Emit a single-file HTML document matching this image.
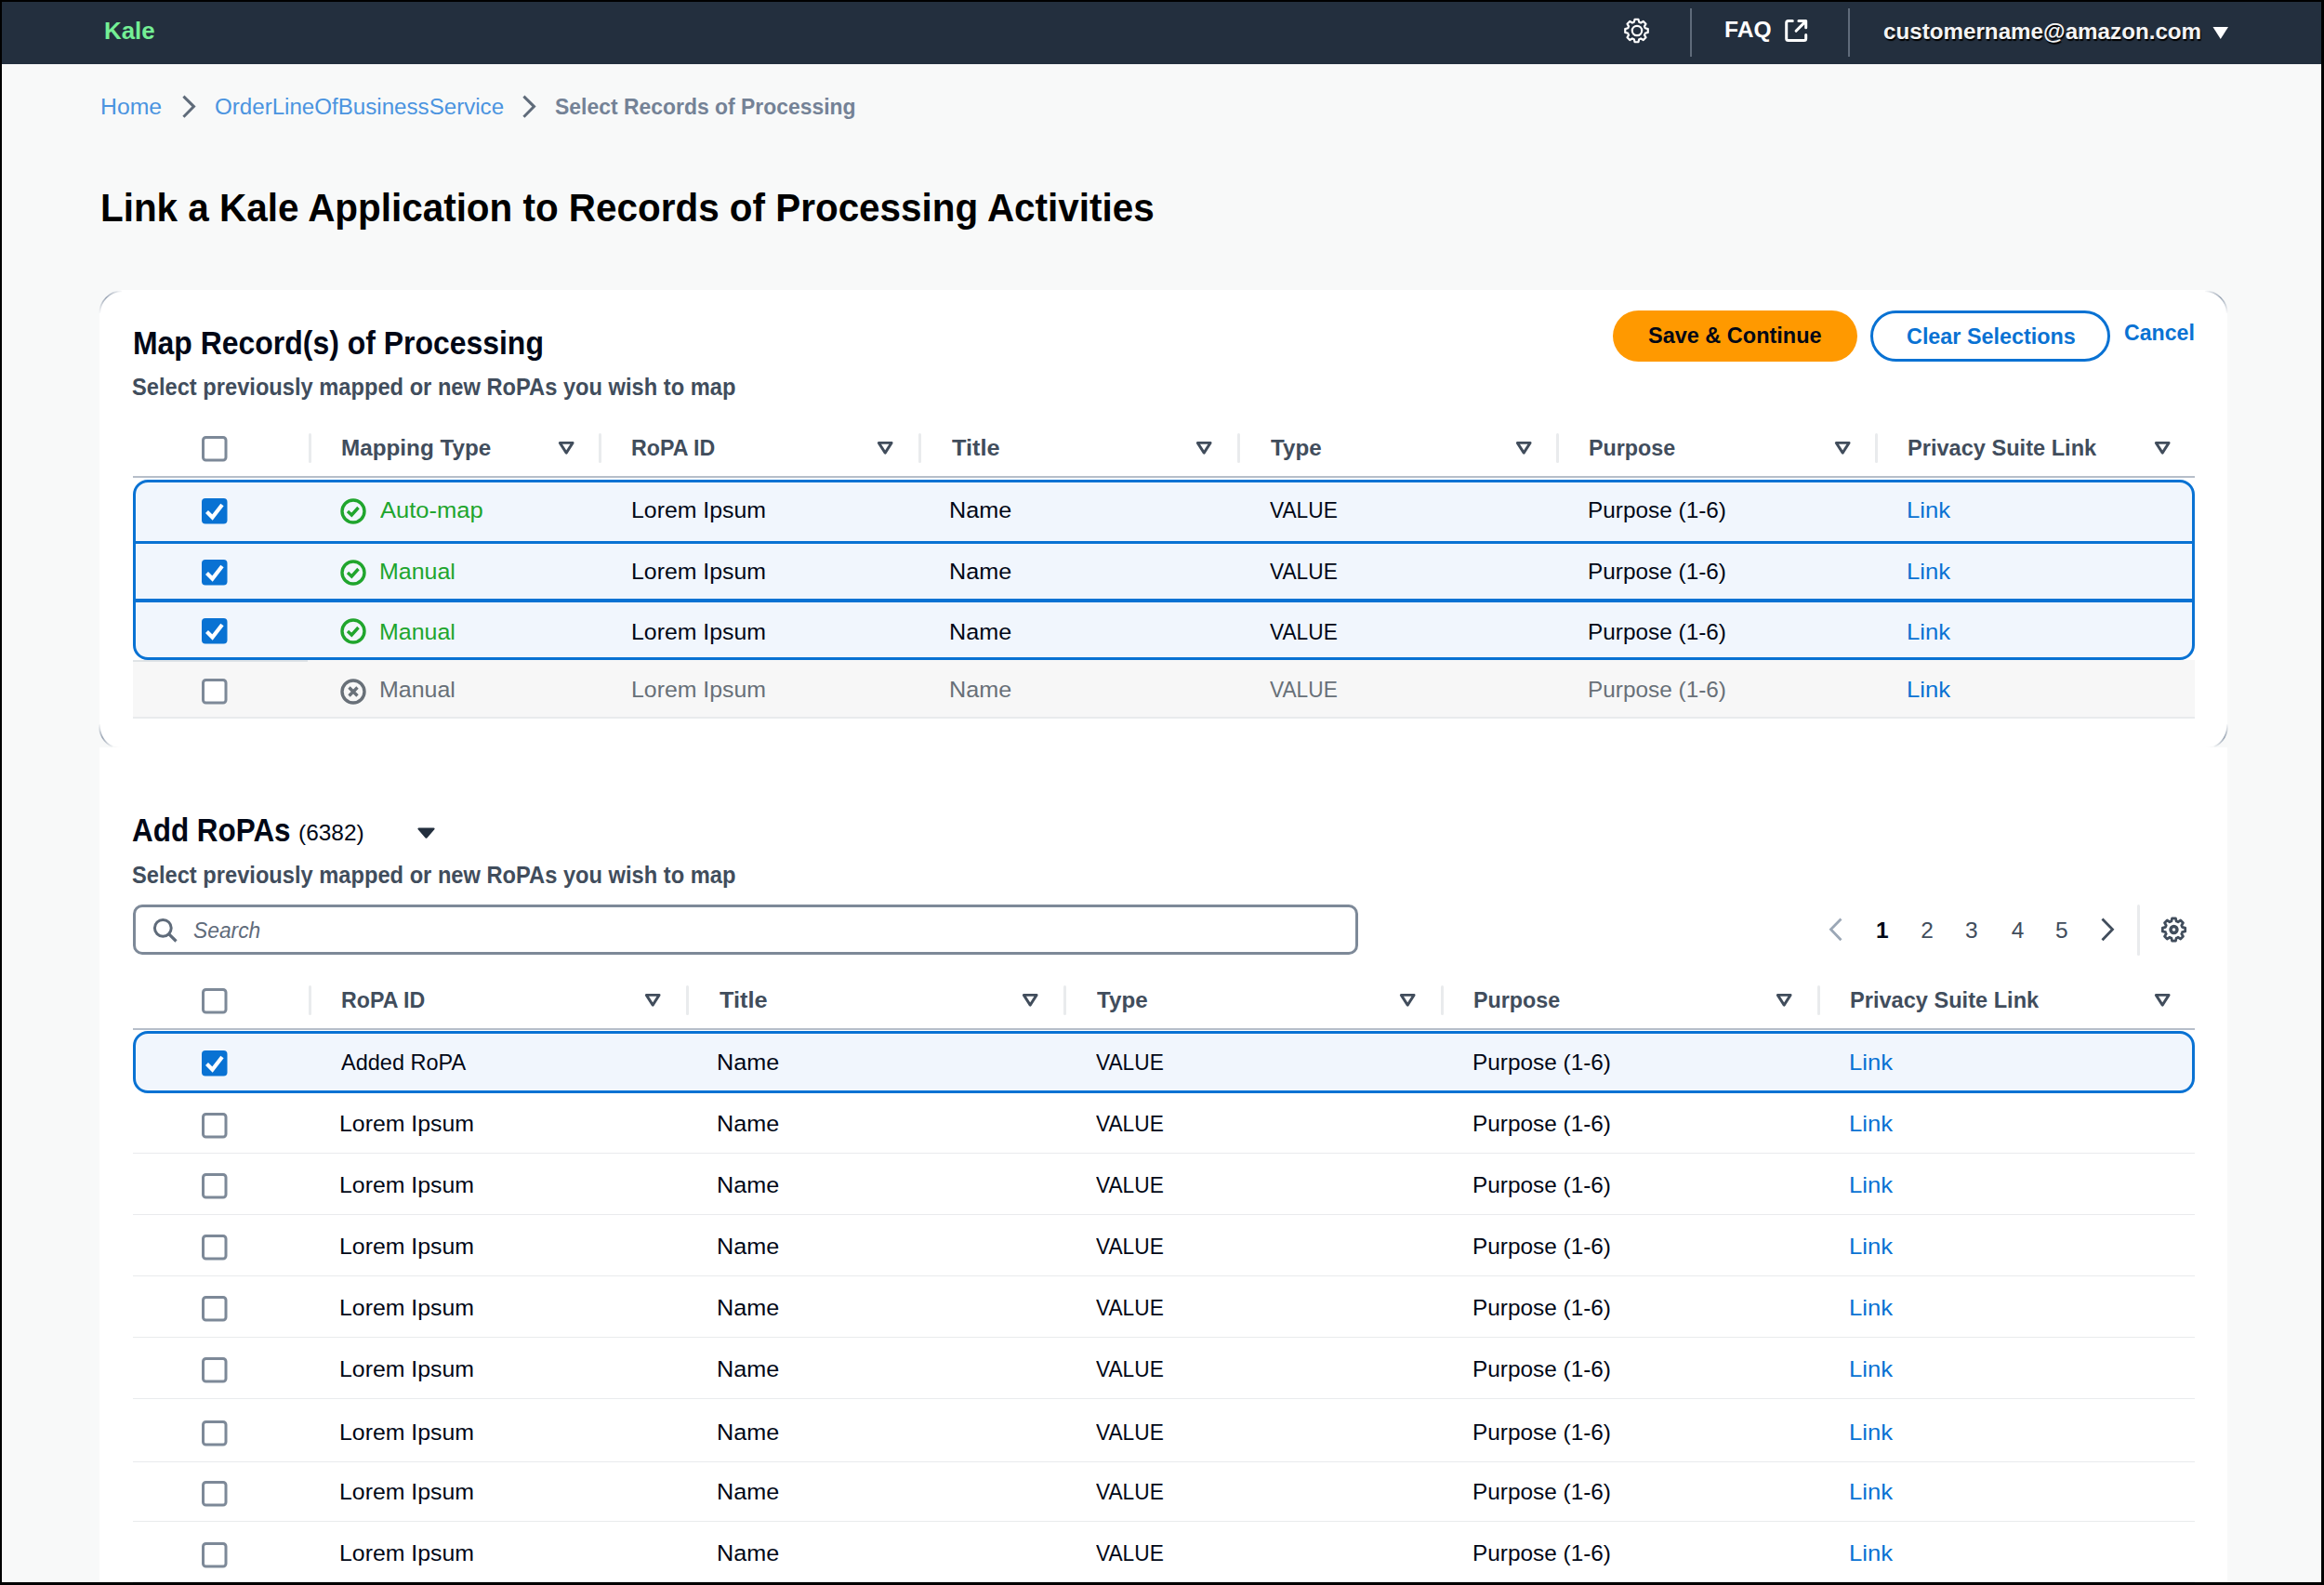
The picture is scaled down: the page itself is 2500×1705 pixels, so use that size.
<!DOCTYPE html><html><head><meta charset="utf-8"><title>Link a Kale Application to Records of Processing Activities</title><style>
html,body{margin:0;padding:0;}
body{width:2500px;height:1705px;position:relative;overflow:hidden;background:#000;font-family:"Liberation Sans", sans-serif;}
.t{position:absolute;white-space:nowrap;}
.r{position:absolute;}
</style></head><body>
<div class="r" style="left:2.0px;top:2.0px;width:2495.0px;height:1700.0px;background:#f8f9f9;"></div>
<div class="r" style="left:2.0px;top:2.0px;width:2495.0px;height:67.0px;background:#232f3e;"></div>
<div class="t" style="left:112.3px;top:20.3px;font-size:26px;line-height:26px;font-weight:700;color:#74ef95;letter-spacing:0px;font-style:normal;transform:scaleX(0.9942);transform-origin:0 0;">Kale</div>
<svg class="r" style="left:1744.0px;top:17.0px;" width="34.0" height="34.0" viewBox="0 0 34.0 34.0"><path d="M14.58,3.75 L18.42,3.75 L19.23,6.80 L19.70,6.95 L20.17,7.13 L20.63,7.34 L21.08,7.56 L23.81,5.98 L26.52,8.69 L24.94,11.42 L25.16,11.87 L25.37,12.33 L25.55,12.80 L25.70,13.27 L28.75,14.08 L28.75,17.92 L25.70,18.73 L25.55,19.20 L25.37,19.67 L25.16,20.13 L24.94,20.58 L26.52,23.31 L23.81,26.02 L21.08,24.44 L20.63,24.66 L20.17,24.87 L19.70,25.05 L19.23,25.20 L18.42,28.25 L14.58,28.25 L13.77,25.20 L13.30,25.05 L12.83,24.87 L12.37,24.66 L11.92,24.44 L9.19,26.02 L6.48,23.31 L8.06,20.58 L7.84,20.13 L7.63,19.67 L7.45,19.20 L7.30,18.73 L4.25,17.92 L4.25,14.08 L7.30,13.27 L7.45,12.80 L7.63,12.33 L7.84,11.87 L8.06,11.42 L6.48,8.69 L9.19,5.98 L11.92,7.56 L12.37,7.34 L12.83,7.13 L13.30,6.95 L13.77,6.80Z" fill="none" stroke="#fff" stroke-width="2.2" stroke-linejoin="round"/><circle cx="17" cy="16" r="5.2" fill="none" stroke="#fff" stroke-width="2.2"/></svg>
<div class="r" style="left:1818.0px;top:9.0px;width:1.5px;height:52.0px;background:#5f6b7a;"></div>
<div class="t" style="left:1854.9px;top:20.2px;font-size:24px;line-height:24px;font-weight:700;color:#fff;letter-spacing:0px;font-style:normal;transform:scaleX(1.0234);transform-origin:0 0;">FAQ</div>
<svg class="r" style="left:1910.0px;top:15.0px;" width="45.0" height="35.0" viewBox="0 0 45.0 35.0"><path d="M18.3,7.5 H13.7 Q11.7,7.5 11.7,9.5 V26.5 Q11.7,28.5 13.7,28.5 H30.7 Q32.7,28.5 32.7,26.5 V22.5" fill="none" stroke="#fff" stroke-width="3" stroke-linecap="round" stroke-linejoin="round"/><path d="M22.1,18.3 L32.2,8.1 M24.9,7.5 H32.7 V14.8" fill="none" stroke="#fff" stroke-width="3" stroke-linecap="round" stroke-linejoin="round"/></svg>
<div class="r" style="left:1988.0px;top:9.0px;width:1.5px;height:52.0px;background:#5f6b7a;"></div>
<div class="t" style="left:2026.2px;top:22.3px;font-size:24px;line-height:24px;font-weight:700;color:#f4f4f4;letter-spacing:0px;font-style:normal;transform:scaleX(1.0077);transform-origin:0 0;text-shadow:1px 2px 1px #000;">customername@amazon.com</div>
<svg class="r" style="left:2378.0px;top:27.0px;" width="22.0" height="18.0" viewBox="0 0 22.0 18.0"><path d="M2.5,2 H19 L10.75,15 Z" fill="#fff"/></svg>
<div class="t" style="left:107.7px;top:103.5px;font-size:23.5px;line-height:23.5px;font-weight:400;color:#4b94e0;letter-spacing:0px;font-style:normal;transform:scaleX(1.0533);transform-origin:0 0;">Home</div>
<svg class="r" style="left:195.0px;top:102.0px;" width="18.0" height="28.0" viewBox="0 0 18.0 28.0"><path d="M2.4,1.6 L13.5,12.6 L2.4,23.8" fill="none" stroke="#5f6b7a" stroke-width="3"/></svg>
<div class="t" style="left:231.0px;top:103.5px;font-size:23.5px;line-height:23.5px;font-weight:400;color:#4b94e0;letter-spacing:0px;font-style:normal;transform:scaleX(1.0266);transform-origin:0 0;">OrderLineOfBusinessService</div>
<svg class="r" style="left:561.0px;top:102.0px;" width="18.0" height="28.0" viewBox="0 0 18.0 28.0"><path d="M2.4,1.6 L13.5,12.6 L2.4,23.8" fill="none" stroke="#5f6b7a" stroke-width="3"/></svg>
<div class="t" style="left:597.1px;top:103.4px;font-size:24px;line-height:24px;font-weight:700;color:#748296;letter-spacing:0px;font-style:normal;transform:scaleX(0.9552);transform-origin:0 0;">Select Records of Processing</div>
<div class="t" style="left:107.9px;top:202.7px;font-size:42px;line-height:42px;font-weight:700;color:#000;letter-spacing:0px;font-style:normal;transform:scaleX(0.9625);transform-origin:0 0;">Link a Kale Application to Records of Processing Activities</div>
<div class="r" style="left:107.0px;top:312.0px;width:2289.0px;height:492.0px;background:#fff;border-radius:24px;"></div>
<div class="t" style="left:143.2px;top:351.0px;font-size:35px;line-height:35px;font-weight:700;color:#000716;letter-spacing:0px;font-style:normal;transform:scaleX(0.9125);transform-origin:0 0;">Map Record(s) of Processing</div>
<div class="t" style="left:142.4px;top:404.4px;font-size:25px;line-height:25px;font-weight:700;color:#414d5c;letter-spacing:0px;font-style:normal;transform:scaleX(0.9469);transform-origin:0 0;">Select previously mapped or new RoPAs you wish to map</div>
<div class="r" style="left:1734.5px;top:333.5px;width:263.5px;height:55.5px;background:#ff9900;border-radius:28px;"></div>
<div class="t" style="left:1773.0px;top:349.4px;font-size:24.5px;line-height:24.5px;font-weight:700;color:#000716;letter-spacing:0px;font-style:normal;transform:scaleX(0.9585);transform-origin:0 0;">Save &amp; Continue</div>
<div class="r" style="left:2012.0px;top:333.5px;width:258.0px;height:55.0px;box-sizing:border-box;border:3px solid #0972d3;border-radius:28px;"></div>
<div class="t" style="left:2050.7px;top:349.6px;font-size:24.5px;line-height:24.5px;font-weight:700;color:#0972d3;letter-spacing:0px;font-style:normal;transform:scaleX(0.9540);transform-origin:0 0;">Clear Selections</div>
<div class="t" style="left:2285.1px;top:346.4px;font-size:24.5px;line-height:24.5px;font-weight:700;color:#0972d3;letter-spacing:0px;font-style:normal;transform:scaleX(0.9436);transform-origin:0 0;">Cancel</div>
<svg class="r" style="left:217.0px;top:468.5px;" width="28.0" height="28.0" viewBox="0 0 28.0 28.0"><rect x="1.5" y="1.5" width="24.5" height="24.5" rx="3" fill="#fff" stroke="#7d8998" stroke-width="3"/></svg>
<div class="r" style="left:331.9px;top:465.5px;width:3.0px;height:32.5px;background:#e9ebed;border-radius:2px;"></div>
<div class="r" style="left:644.1px;top:465.5px;width:3.0px;height:32.5px;background:#e9ebed;border-radius:2px;"></div>
<div class="r" style="left:987.5px;top:465.5px;width:3.0px;height:32.5px;background:#e9ebed;border-radius:2px;"></div>
<div class="r" style="left:1330.5px;top:465.5px;width:3.0px;height:32.5px;background:#e9ebed;border-radius:2px;"></div>
<div class="r" style="left:1674.3px;top:465.5px;width:3.0px;height:32.5px;background:#e9ebed;border-radius:2px;"></div>
<div class="r" style="left:2017.3px;top:465.5px;width:3.0px;height:32.5px;background:#e9ebed;border-radius:2px;"></div>
<div class="t" style="left:366.9px;top:471.1px;font-size:23.5px;line-height:23.5px;font-weight:700;color:#414d5c;letter-spacing:0px;font-style:normal;transform:scaleX(1.0323);transform-origin:0 0;">Mapping Type</div>
<svg class="r" style="left:598.6px;top:473.0px;" width="22.0" height="18.0" viewBox="0 0 22.0 18.0"><path d="M3.3,3.4 H17.1 L10.2,14.1 Z" fill="none" stroke="#414d5c" stroke-width="2.9" stroke-linejoin="round"/></svg>
<div class="t" style="left:679.1px;top:471.1px;font-size:23.5px;line-height:23.5px;font-weight:700;color:#414d5c;letter-spacing:0px;font-style:normal;transform:scaleX(0.9867);transform-origin:0 0;">RoPA ID</div>
<svg class="r" style="left:942.0px;top:473.0px;" width="22.0" height="18.0" viewBox="0 0 22.0 18.0"><path d="M3.3,3.4 H17.1 L10.2,14.1 Z" fill="none" stroke="#414d5c" stroke-width="2.9" stroke-linejoin="round"/></svg>
<div class="t" style="left:1023.5px;top:471.1px;font-size:23.5px;line-height:23.5px;font-weight:700;color:#414d5c;letter-spacing:0px;font-style:normal;transform:scaleX(1.0766);transform-origin:0 0;">Title</div>
<svg class="r" style="left:1285.0px;top:473.0px;" width="22.0" height="18.0" viewBox="0 0 22.0 18.0"><path d="M3.3,3.4 H17.1 L10.2,14.1 Z" fill="none" stroke="#414d5c" stroke-width="2.9" stroke-linejoin="round"/></svg>
<div class="t" style="left:1366.5px;top:471.1px;font-size:23.5px;line-height:23.5px;font-weight:700;color:#414d5c;letter-spacing:0px;font-style:normal;transform:scaleX(1.0288);transform-origin:0 0;">Type</div>
<svg class="r" style="left:1628.8px;top:473.0px;" width="22.0" height="18.0" viewBox="0 0 22.0 18.0"><path d="M3.3,3.4 H17.1 L10.2,14.1 Z" fill="none" stroke="#414d5c" stroke-width="2.9" stroke-linejoin="round"/></svg>
<div class="t" style="left:1709.3px;top:471.1px;font-size:23.5px;line-height:23.5px;font-weight:700;color:#414d5c;letter-spacing:0px;font-style:normal;transform:scaleX(0.9913);transform-origin:0 0;">Purpose</div>
<svg class="r" style="left:1971.8px;top:473.0px;" width="22.0" height="18.0" viewBox="0 0 22.0 18.0"><path d="M3.3,3.4 H17.1 L10.2,14.1 Z" fill="none" stroke="#414d5c" stroke-width="2.9" stroke-linejoin="round"/></svg>
<div class="t" style="left:2052.3px;top:471.1px;font-size:23.5px;line-height:23.5px;font-weight:700;color:#414d5c;letter-spacing:0px;font-style:normal;transform:scaleX(1.0035);transform-origin:0 0;">Privacy Suite Link</div>
<svg class="r" style="left:2316.0px;top:473.0px;" width="22.0" height="18.0" viewBox="0 0 22.0 18.0"><path d="M3.3,3.4 H17.1 L10.2,14.1 Z" fill="none" stroke="#414d5c" stroke-width="2.9" stroke-linejoin="round"/></svg>
<div class="r" style="left:143.0px;top:512.0px;width:2218.0px;height:1.5px;background:#b6bec9;"></div>
<div class="r" style="left:142.5px;top:516.0px;width:2218.5px;height:194.0px;box-sizing:border-box;border:3px solid #0972d3;border-radius:16px;background:#f1f6fd;"></div>
<div class="r" style="left:145.0px;top:582.0px;width:2213.0px;height:3.0px;background:#0972d3;"></div>
<div class="r" style="left:145.0px;top:644.0px;width:2213.0px;height:3.5px;background:#0972d3;"></div>
<div class="r" style="left:143.0px;top:710.0px;width:2218.0px;height:61.0px;background:#f7f7f7;"></div>
<div class="r" style="left:143.0px;top:771.0px;width:2218.0px;height:1.5px;background:#e9ebed;"></div>
<svg class="r" style="left:217.0px;top:536.2px;" width="28.0" height="28.0" viewBox="0 0 28.0 28.0"><rect x="0" y="0" width="27.5" height="27.5" rx="4" fill="#0972d3"/><path d="M5.5,14.5 L11.5,20.5 L22,7" fill="none" stroke="#fff" stroke-width="4.2"/></svg>
<svg class="r" style="left:366.0px;top:536.0px;" width="30.0" height="30.0" viewBox="0 0 30.0 30.0"><circle cx="14" cy="14" r="12" fill="none" stroke="#20a52d" stroke-width="3.4"/><path d="M8,14 L12.3,18 L19.5,10" fill="none" stroke="#20a52d" stroke-width="3.4" stroke-linejoin="miter"/></svg>
<div class="t" style="left:408.5px;top:537.2px;font-size:24.5px;line-height:24.5px;font-weight:400;color:#20a52d;letter-spacing:0px;font-style:normal;transform:scaleX(1.0429);transform-origin:0 0;">Auto-map</div>
<div class="t" style="left:678.7px;top:537.2px;font-size:24.5px;line-height:24.5px;font-weight:400;color:#000716;letter-spacing:0px;font-style:normal;transform:scaleX(1.0143);transform-origin:0 0;">Lorem Ipsum</div>
<div class="t" style="left:1020.9px;top:537.2px;font-size:24.5px;line-height:24.5px;font-weight:400;color:#000716;letter-spacing:0px;font-style:normal;transform:scaleX(1.0274);transform-origin:0 0;">Name</div>
<div class="t" style="left:1366.3px;top:537.2px;font-size:24.5px;line-height:24.5px;font-weight:400;color:#000716;letter-spacing:0px;font-style:normal;transform:scaleX(0.9269);transform-origin:0 0;">VALUE</div>
<div class="t" style="left:1708.3px;top:537.2px;font-size:24.5px;line-height:24.5px;font-weight:400;color:#000716;letter-spacing:0px;font-style:normal;transform:scaleX(0.9946);transform-origin:0 0;">Purpose (1-6)</div>
<div class="t" style="left:2051.1px;top:537.2px;font-size:24.5px;line-height:24.5px;font-weight:400;color:#0972d3;letter-spacing:0px;font-style:normal;transform:scaleX(1.0465);transform-origin:0 0;">Link</div>
<svg class="r" style="left:217.0px;top:602.2px;" width="28.0" height="28.0" viewBox="0 0 28.0 28.0"><rect x="0" y="0" width="27.5" height="27.5" rx="4" fill="#0972d3"/><path d="M5.5,14.5 L11.5,20.5 L22,7" fill="none" stroke="#fff" stroke-width="4.2"/></svg>
<svg class="r" style="left:366.0px;top:602.0px;" width="30.0" height="30.0" viewBox="0 0 30.0 30.0"><circle cx="14" cy="14" r="12" fill="none" stroke="#20a52d" stroke-width="3.4"/><path d="M8,14 L12.3,18 L19.5,10" fill="none" stroke="#20a52d" stroke-width="3.4" stroke-linejoin="miter"/></svg>
<div class="t" style="left:407.8px;top:603.4px;font-size:24.5px;line-height:24.5px;font-weight:400;color:#20a52d;letter-spacing:0px;font-style:normal;transform:scaleX(1.0195);transform-origin:0 0;">Manual</div>
<div class="t" style="left:678.7px;top:603.4px;font-size:24.5px;line-height:24.5px;font-weight:400;color:#000716;letter-spacing:0px;font-style:normal;transform:scaleX(1.0143);transform-origin:0 0;">Lorem Ipsum</div>
<div class="t" style="left:1020.9px;top:603.4px;font-size:24.5px;line-height:24.5px;font-weight:400;color:#000716;letter-spacing:0px;font-style:normal;transform:scaleX(1.0274);transform-origin:0 0;">Name</div>
<div class="t" style="left:1366.3px;top:603.4px;font-size:24.5px;line-height:24.5px;font-weight:400;color:#000716;letter-spacing:0px;font-style:normal;transform:scaleX(0.9269);transform-origin:0 0;">VALUE</div>
<div class="t" style="left:1708.3px;top:603.4px;font-size:24.5px;line-height:24.5px;font-weight:400;color:#000716;letter-spacing:0px;font-style:normal;transform:scaleX(0.9946);transform-origin:0 0;">Purpose (1-6)</div>
<div class="t" style="left:2051.1px;top:603.4px;font-size:24.5px;line-height:24.5px;font-weight:400;color:#0972d3;letter-spacing:0px;font-style:normal;transform:scaleX(1.0465);transform-origin:0 0;">Link</div>
<svg class="r" style="left:217.0px;top:665.0px;" width="28.0" height="28.0" viewBox="0 0 28.0 28.0"><rect x="0" y="0" width="27.5" height="27.5" rx="4" fill="#0972d3"/><path d="M5.5,14.5 L11.5,20.5 L22,7" fill="none" stroke="#fff" stroke-width="4.2"/></svg>
<svg class="r" style="left:366.0px;top:664.7px;" width="30.0" height="30.0" viewBox="0 0 30.0 30.0"><circle cx="14" cy="14" r="12" fill="none" stroke="#20a52d" stroke-width="3.4"/><path d="M8,14 L12.3,18 L19.5,10" fill="none" stroke="#20a52d" stroke-width="3.4" stroke-linejoin="miter"/></svg>
<div class="t" style="left:407.8px;top:667.5px;font-size:24.5px;line-height:24.5px;font-weight:400;color:#20a52d;letter-spacing:0px;font-style:normal;transform:scaleX(1.0195);transform-origin:0 0;">Manual</div>
<div class="t" style="left:678.7px;top:667.5px;font-size:24.5px;line-height:24.5px;font-weight:400;color:#000716;letter-spacing:0px;font-style:normal;transform:scaleX(1.0143);transform-origin:0 0;">Lorem Ipsum</div>
<div class="t" style="left:1020.9px;top:667.5px;font-size:24.5px;line-height:24.5px;font-weight:400;color:#000716;letter-spacing:0px;font-style:normal;transform:scaleX(1.0274);transform-origin:0 0;">Name</div>
<div class="t" style="left:1366.3px;top:667.5px;font-size:24.5px;line-height:24.5px;font-weight:400;color:#000716;letter-spacing:0px;font-style:normal;transform:scaleX(0.9269);transform-origin:0 0;">VALUE</div>
<div class="t" style="left:1708.3px;top:667.5px;font-size:24.5px;line-height:24.5px;font-weight:400;color:#000716;letter-spacing:0px;font-style:normal;transform:scaleX(0.9946);transform-origin:0 0;">Purpose (1-6)</div>
<div class="t" style="left:2051.1px;top:667.5px;font-size:24.5px;line-height:24.5px;font-weight:400;color:#0972d3;letter-spacing:0px;font-style:normal;transform:scaleX(1.0465);transform-origin:0 0;">Link</div>
<svg class="r" style="left:217.0px;top:730.2px;" width="28.0" height="28.0" viewBox="0 0 28.0 28.0"><rect x="1.5" y="1.5" width="24.5" height="24.5" rx="3" fill="#fff" stroke="#7d8998" stroke-width="3"/></svg>
<svg class="r" style="left:366.0px;top:730.0px;" width="30.0" height="30.0" viewBox="0 0 30.0 30.0"><circle cx="14" cy="14" r="12" fill="none" stroke="#687078" stroke-width="3.4"/><path d="M9.5,9.5 L18.5,18.5 M18.5,9.5 L9.5,18.5" fill="none" stroke="#687078" stroke-width="3.4"/></svg>
<div class="t" style="left:407.8px;top:730.2px;font-size:24.5px;line-height:24.5px;font-weight:400;color:#687078;letter-spacing:0px;font-style:normal;transform:scaleX(1.0195);transform-origin:0 0;">Manual</div>
<div class="t" style="left:678.7px;top:730.2px;font-size:24.5px;line-height:24.5px;font-weight:400;color:#687078;letter-spacing:0px;font-style:normal;transform:scaleX(1.0143);transform-origin:0 0;">Lorem Ipsum</div>
<div class="t" style="left:1020.9px;top:730.2px;font-size:24.5px;line-height:24.5px;font-weight:400;color:#687078;letter-spacing:0px;font-style:normal;transform:scaleX(1.0274);transform-origin:0 0;">Name</div>
<div class="t" style="left:1366.3px;top:730.2px;font-size:24.5px;line-height:24.5px;font-weight:400;color:#687078;letter-spacing:0px;font-style:normal;transform:scaleX(0.9269);transform-origin:0 0;">VALUE</div>
<div class="t" style="left:1708.3px;top:730.2px;font-size:24.5px;line-height:24.5px;font-weight:400;color:#687078;letter-spacing:0px;font-style:normal;transform:scaleX(0.9946);transform-origin:0 0;">Purpose (1-6)</div>
<div class="t" style="left:2051.1px;top:730.2px;font-size:24.5px;line-height:24.5px;font-weight:400;color:#0972d3;letter-spacing:0px;font-style:normal;transform:scaleX(1.0465);transform-origin:0 0;">Link</div>
<svg class="r" style="left:105.0px;top:310.0px;" width="34.0" height="34.0" viewBox="0 0 34.0 34.0"><defs><linearGradient id="g1" gradientUnits="userSpaceOnUse" x1="2" y1="28" x2="27" y2="3"><stop offset="0" stop-color="#9aa5b4" stop-opacity="0"/><stop offset="0.5" stop-color="#9aa5b4" stop-opacity="1"/><stop offset="1" stop-color="#9aa5b4" stop-opacity="0"/></linearGradient></defs><path d="M2.2,27 A24,24 0 0 1 26,3.2" fill="none" stroke="url(#g1)" stroke-width="1.7"/></svg>
<svg class="r" style="left:2364.0px;top:310.0px;" width="34.0" height="34.0" viewBox="0 0 34.0 34.0"><defs><linearGradient id="g2" gradientUnits="userSpaceOnUse" x1="7" y1="3" x2="32" y2="28"><stop offset="0" stop-color="#9aa5b4" stop-opacity="0"/><stop offset="0.5" stop-color="#9aa5b4" stop-opacity="1"/><stop offset="1" stop-color="#9aa5b4" stop-opacity="0"/></linearGradient></defs><path d="M8,3.2 A24,24 0 0 1 31.8,27" fill="none" stroke="url(#g2)" stroke-width="1.7"/></svg>
<svg class="r" style="left:105.0px;top:772.0px;" width="34.0" height="34.0" viewBox="0 0 34.0 34.0"><defs><linearGradient id="g3" gradientUnits="userSpaceOnUse" x1="2" y1="6" x2="17" y2="32"><stop offset="0" stop-color="#9aa5b4" stop-opacity="0"/><stop offset="0.5" stop-color="#9aa5b4" stop-opacity="1"/><stop offset="1" stop-color="#9aa5b4" stop-opacity="0"/></linearGradient></defs><path d="M2.2,7 A24,24 0 0 0 16,31.2" fill="none" stroke="url(#g3)" stroke-width="1.7"/></svg>
<svg class="r" style="left:2364.0px;top:772.0px;" width="34.0" height="34.0" viewBox="0 0 34.0 34.0"><defs><linearGradient id="g4" gradientUnits="userSpaceOnUse" x1="32" y1="6" x2="17" y2="32"><stop offset="0" stop-color="#9aa5b4" stop-opacity="0"/><stop offset="0.5" stop-color="#9aa5b4" stop-opacity="1"/><stop offset="1" stop-color="#9aa5b4" stop-opacity="0"/></linearGradient></defs><path d="M31.8,7 A24,24 0 0 1 18,31.2" fill="none" stroke="url(#g4)" stroke-width="1.7"/></svg>
<div class="r" style="left:143.0px;top:710.0px;width:188.0px;height:1.5px;background:#dfe3e6;"></div>
<div class="r" style="left:107.0px;top:804.0px;width:2289.0px;height:898.0px;background:#fff;"></div>
<div class="t" style="left:141.9px;top:875.2px;font-size:35px;line-height:35px;font-weight:700;color:#000716;letter-spacing:0px;font-style:normal;transform:scaleX(0.8984);transform-origin:0 0;">Add RoPAs</div>
<div class="t" style="left:320.9px;top:884.2px;font-size:24.5px;line-height:24.5px;font-weight:400;color:#000716;letter-spacing:0px;font-style:normal;transform:scaleX(0.9971);transform-origin:0 0;">(6382)</div>
<svg class="r" style="left:447.0px;top:888.0px;" width="24.0" height="16.0" viewBox="0 0 24.0 16.0"><path d="M3.5,3.5 H19.5 L11.5,12.7 Z" fill="#232f3e" stroke="#232f3e" stroke-width="2.2" stroke-linejoin="round"/></svg>
<div class="t" style="left:142.4px;top:928.9px;font-size:25px;line-height:25px;font-weight:700;color:#414d5c;letter-spacing:0px;font-style:normal;transform:scaleX(0.9469);transform-origin:0 0;">Select previously mapped or new RoPAs you wish to map</div>
<div class="r" style="left:143.0px;top:973.0px;width:1318.0px;height:54.0px;box-sizing:border-box;border:3px solid #7d8998;border-radius:10px;background:#fff;"></div>
<svg class="r" style="left:160.0px;top:983.0px;" width="36.0" height="36.0" viewBox="0 0 36.0 36.0"><circle cx="15.3" cy="15.3" r="8.9" fill="none" stroke="#5f6b7a" stroke-width="3"/><path d="M21.8,21.8 L29.5,29.5" stroke="#5f6b7a" stroke-width="3.2"/></svg>
<div class="t" style="left:207.5px;top:988.7px;font-size:24.5px;line-height:24.5px;font-weight:400;color:#5f6b7a;letter-spacing:0px;font-style:italic;transform:scaleX(0.9303);transform-origin:0 0;">Search</div>
<svg class="r" style="left:1962.0px;top:985.0px;" width="24.0" height="30.0" viewBox="0 0 24.0 30.0"><path d="M18.5,3.5 L7.5,14.8 L18.5,26.3" fill="none" stroke="#9ba7b6" stroke-width="2.8"/></svg>
<div class="t" style="left:2018.0px;top:988.5px;font-size:24.5px;line-height:24.5px;font-weight:700;color:#000716;letter-spacing:0px;font-style:normal;">1</div>
<div class="t" style="left:2066.3px;top:988.5px;font-size:24.5px;line-height:24.5px;font-weight:400;color:#414d5c;letter-spacing:0px;font-style:normal;">2</div>
<div class="t" style="left:2114.0px;top:988.5px;font-size:24.5px;line-height:24.5px;font-weight:400;color:#414d5c;letter-spacing:0px;font-style:normal;">3</div>
<div class="t" style="left:2163.8px;top:988.5px;font-size:24.5px;line-height:24.5px;font-weight:400;color:#414d5c;letter-spacing:0px;font-style:normal;">4</div>
<div class="t" style="left:2211.0px;top:988.5px;font-size:24.5px;line-height:24.5px;font-weight:400;color:#414d5c;letter-spacing:0px;font-style:normal;">5</div>
<svg class="r" style="left:2256.0px;top:985.0px;" width="24.0" height="30.0" viewBox="0 0 24.0 30.0"><path d="M5.5,3.5 L16.5,14.8 L5.5,26.3" fill="none" stroke="#414d5c" stroke-width="2.8"/></svg>
<div class="r" style="left:2299.0px;top:972.5px;width:3.0px;height:55.0px;background:#e9ebed;border-radius:2px;"></div>
<svg class="r" style="left:2321.0px;top:983.0px;" width="36.0" height="34.0" viewBox="0 0 36.0 34.0"><path d="M15.60,4.85 L19.40,4.85 L20.17,7.99 L20.64,8.14 L21.10,8.32 L21.55,8.52 L21.99,8.74 L24.75,7.06 L27.44,9.75 L25.76,12.51 L25.98,12.95 L26.18,13.40 L26.36,13.86 L26.51,14.33 L29.65,15.10 L29.65,18.90 L26.51,19.67 L26.36,20.14 L26.18,20.60 L25.98,21.05 L25.76,21.49 L27.44,24.25 L24.75,26.94 L21.99,25.26 L21.55,25.48 L21.10,25.68 L20.64,25.86 L20.17,26.01 L19.40,29.15 L15.60,29.15 L14.83,26.01 L14.36,25.86 L13.90,25.68 L13.45,25.48 L13.01,25.26 L10.25,26.94 L7.56,24.25 L9.24,21.49 L9.02,21.05 L8.82,20.60 L8.64,20.14 L8.49,19.67 L5.35,18.90 L5.35,15.10 L8.49,14.33 L8.64,13.86 L8.82,13.40 L9.02,12.95 L9.24,12.51 L7.56,9.75 L10.25,7.06 L13.01,8.74 L13.45,8.52 L13.90,8.32 L14.36,8.14 L14.83,7.99Z" fill="none" stroke="#414d5c" stroke-width="2.8" stroke-linejoin="round"/><circle cx="17.5" cy="17" r="3.5" fill="none" stroke="#414d5c" stroke-width="3.4"/></svg>
<svg class="r" style="left:217.0px;top:1062.5px;" width="28.0" height="28.0" viewBox="0 0 28.0 28.0"><rect x="1.5" y="1.5" width="24.5" height="24.5" rx="3" fill="#fff" stroke="#7d8998" stroke-width="3"/></svg>
<div class="r" style="left:331.8px;top:1059.5px;width:3.0px;height:32.5px;background:#e9ebed;border-radius:2px;"></div>
<div class="r" style="left:737.5px;top:1059.5px;width:3.0px;height:32.5px;background:#e9ebed;border-radius:2px;"></div>
<div class="r" style="left:1143.5px;top:1059.5px;width:3.0px;height:32.5px;background:#e9ebed;border-radius:2px;"></div>
<div class="r" style="left:1549.8px;top:1059.5px;width:3.0px;height:32.5px;background:#e9ebed;border-radius:2px;"></div>
<div class="r" style="left:1954.9px;top:1059.5px;width:3.0px;height:32.5px;background:#e9ebed;border-radius:2px;"></div>
<div class="t" style="left:366.8px;top:1064.5px;font-size:23.5px;line-height:23.5px;font-weight:700;color:#414d5c;letter-spacing:0px;font-style:normal;transform:scaleX(0.9867);transform-origin:0 0;">RoPA ID</div>
<svg class="r" style="left:692.0px;top:1066.5px;" width="22.0" height="18.0" viewBox="0 0 22.0 18.0"><path d="M3.3,3.4 H17.1 L10.2,14.1 Z" fill="none" stroke="#414d5c" stroke-width="2.9" stroke-linejoin="round"/></svg>
<div class="t" style="left:773.5px;top:1064.5px;font-size:23.5px;line-height:23.5px;font-weight:700;color:#414d5c;letter-spacing:0px;font-style:normal;transform:scaleX(1.0766);transform-origin:0 0;">Title</div>
<svg class="r" style="left:1098.0px;top:1066.5px;" width="22.0" height="18.0" viewBox="0 0 22.0 18.0"><path d="M3.3,3.4 H17.1 L10.2,14.1 Z" fill="none" stroke="#414d5c" stroke-width="2.9" stroke-linejoin="round"/></svg>
<div class="t" style="left:1179.5px;top:1064.5px;font-size:23.5px;line-height:23.5px;font-weight:700;color:#414d5c;letter-spacing:0px;font-style:normal;transform:scaleX(1.0288);transform-origin:0 0;">Type</div>
<svg class="r" style="left:1504.3px;top:1066.5px;" width="22.0" height="18.0" viewBox="0 0 22.0 18.0"><path d="M3.3,3.4 H17.1 L10.2,14.1 Z" fill="none" stroke="#414d5c" stroke-width="2.9" stroke-linejoin="round"/></svg>
<div class="t" style="left:1584.8px;top:1064.5px;font-size:23.5px;line-height:23.5px;font-weight:700;color:#414d5c;letter-spacing:0px;font-style:normal;transform:scaleX(0.9913);transform-origin:0 0;">Purpose</div>
<svg class="r" style="left:1909.4px;top:1066.5px;" width="22.0" height="18.0" viewBox="0 0 22.0 18.0"><path d="M3.3,3.4 H17.1 L10.2,14.1 Z" fill="none" stroke="#414d5c" stroke-width="2.9" stroke-linejoin="round"/></svg>
<div class="t" style="left:1989.9px;top:1064.5px;font-size:23.5px;line-height:23.5px;font-weight:700;color:#414d5c;letter-spacing:0px;font-style:normal;transform:scaleX(1.0035);transform-origin:0 0;">Privacy Suite Link</div>
<svg class="r" style="left:2316.0px;top:1066.5px;" width="22.0" height="18.0" viewBox="0 0 22.0 18.0"><path d="M3.3,3.4 H17.1 L10.2,14.1 Z" fill="none" stroke="#414d5c" stroke-width="2.9" stroke-linejoin="round"/></svg>
<div class="r" style="left:143.0px;top:1106.0px;width:2218.0px;height:1.5px;background:#b6bec9;"></div>
<div class="r" style="left:142.5px;top:1109.2px;width:2218.5px;height:66.4px;box-sizing:border-box;border:3px solid #0972d3;border-radius:16px;background:#f1f6fd;"></div>
<svg class="r" style="left:217.0px;top:1130.0px;" width="28.0" height="28.0" viewBox="0 0 28.0 28.0"><rect x="0" y="0" width="27.5" height="27.5" rx="4" fill="#0972d3"/><path d="M5.5,14.5 L11.5,20.5 L22,7" fill="none" stroke="#fff" stroke-width="4.2"/></svg>
<div class="t" style="left:366.5px;top:1130.6px;font-size:24.5px;line-height:24.5px;font-weight:400;color:#000716;letter-spacing:0px;font-style:normal;transform:scaleX(0.9593);transform-origin:0 0;">Added RoPA</div>
<div class="t" style="left:770.9px;top:1130.6px;font-size:24.5px;line-height:24.5px;font-weight:400;color:#000716;letter-spacing:0px;font-style:normal;transform:scaleX(1.0274);transform-origin:0 0;">Name</div>
<div class="t" style="left:1179.0px;top:1130.6px;font-size:24.5px;line-height:24.5px;font-weight:400;color:#000716;letter-spacing:0px;font-style:normal;transform:scaleX(0.9269);transform-origin:0 0;">VALUE</div>
<div class="t" style="left:1583.6px;top:1130.6px;font-size:24.5px;line-height:24.5px;font-weight:400;color:#000716;letter-spacing:0px;font-style:normal;transform:scaleX(0.9946);transform-origin:0 0;">Purpose (1-6)</div>
<div class="t" style="left:1988.8px;top:1130.6px;font-size:24.5px;line-height:24.5px;font-weight:400;color:#0972d3;letter-spacing:0px;font-style:normal;transform:scaleX(1.0465);transform-origin:0 0;">Link</div>
<svg class="r" style="left:217.0px;top:1196.6px;" width="28.0" height="28.0" viewBox="0 0 28.0 28.0"><rect x="1.5" y="1.5" width="24.5" height="24.5" rx="3" fill="#fff" stroke="#7d8998" stroke-width="3"/></svg>
<div class="t" style="left:365.3px;top:1197.2px;font-size:24.5px;line-height:24.5px;font-weight:400;color:#000716;letter-spacing:0px;font-style:normal;transform:scaleX(1.0143);transform-origin:0 0;">Lorem Ipsum</div>
<div class="t" style="left:770.9px;top:1197.2px;font-size:24.5px;line-height:24.5px;font-weight:400;color:#000716;letter-spacing:0px;font-style:normal;transform:scaleX(1.0274);transform-origin:0 0;">Name</div>
<div class="t" style="left:1179.0px;top:1197.2px;font-size:24.5px;line-height:24.5px;font-weight:400;color:#000716;letter-spacing:0px;font-style:normal;transform:scaleX(0.9269);transform-origin:0 0;">VALUE</div>
<div class="t" style="left:1583.6px;top:1197.2px;font-size:24.5px;line-height:24.5px;font-weight:400;color:#000716;letter-spacing:0px;font-style:normal;transform:scaleX(0.9946);transform-origin:0 0;">Purpose (1-6)</div>
<div class="t" style="left:1988.8px;top:1197.2px;font-size:24.5px;line-height:24.5px;font-weight:400;color:#0972d3;letter-spacing:0px;font-style:normal;transform:scaleX(1.0465);transform-origin:0 0;">Link</div>
<div class="r" style="left:143.0px;top:1239.8px;width:2218.0px;height:1.5px;background:#e9ebed;"></div>
<svg class="r" style="left:217.0px;top:1262.4px;" width="28.0" height="28.0" viewBox="0 0 28.0 28.0"><rect x="1.5" y="1.5" width="24.5" height="24.5" rx="3" fill="#fff" stroke="#7d8998" stroke-width="3"/></svg>
<div class="t" style="left:365.3px;top:1263.0px;font-size:24.5px;line-height:24.5px;font-weight:400;color:#000716;letter-spacing:0px;font-style:normal;transform:scaleX(1.0143);transform-origin:0 0;">Lorem Ipsum</div>
<div class="t" style="left:770.9px;top:1263.0px;font-size:24.5px;line-height:24.5px;font-weight:400;color:#000716;letter-spacing:0px;font-style:normal;transform:scaleX(1.0274);transform-origin:0 0;">Name</div>
<div class="t" style="left:1179.0px;top:1263.0px;font-size:24.5px;line-height:24.5px;font-weight:400;color:#000716;letter-spacing:0px;font-style:normal;transform:scaleX(0.9269);transform-origin:0 0;">VALUE</div>
<div class="t" style="left:1583.6px;top:1263.0px;font-size:24.5px;line-height:24.5px;font-weight:400;color:#000716;letter-spacing:0px;font-style:normal;transform:scaleX(0.9946);transform-origin:0 0;">Purpose (1-6)</div>
<div class="t" style="left:1988.8px;top:1263.0px;font-size:24.5px;line-height:24.5px;font-weight:400;color:#0972d3;letter-spacing:0px;font-style:normal;transform:scaleX(1.0465);transform-origin:0 0;">Link</div>
<div class="r" style="left:143.0px;top:1305.8px;width:2218.0px;height:1.5px;background:#e9ebed;"></div>
<svg class="r" style="left:217.0px;top:1328.4px;" width="28.0" height="28.0" viewBox="0 0 28.0 28.0"><rect x="1.5" y="1.5" width="24.5" height="24.5" rx="3" fill="#fff" stroke="#7d8998" stroke-width="3"/></svg>
<div class="t" style="left:365.3px;top:1329.0px;font-size:24.5px;line-height:24.5px;font-weight:400;color:#000716;letter-spacing:0px;font-style:normal;transform:scaleX(1.0143);transform-origin:0 0;">Lorem Ipsum</div>
<div class="t" style="left:770.9px;top:1329.0px;font-size:24.5px;line-height:24.5px;font-weight:400;color:#000716;letter-spacing:0px;font-style:normal;transform:scaleX(1.0274);transform-origin:0 0;">Name</div>
<div class="t" style="left:1179.0px;top:1329.0px;font-size:24.5px;line-height:24.5px;font-weight:400;color:#000716;letter-spacing:0px;font-style:normal;transform:scaleX(0.9269);transform-origin:0 0;">VALUE</div>
<div class="t" style="left:1583.6px;top:1329.0px;font-size:24.5px;line-height:24.5px;font-weight:400;color:#000716;letter-spacing:0px;font-style:normal;transform:scaleX(0.9946);transform-origin:0 0;">Purpose (1-6)</div>
<div class="t" style="left:1988.8px;top:1329.0px;font-size:24.5px;line-height:24.5px;font-weight:400;color:#0972d3;letter-spacing:0px;font-style:normal;transform:scaleX(1.0465);transform-origin:0 0;">Link</div>
<div class="r" style="left:143.0px;top:1371.7px;width:2218.0px;height:1.5px;background:#e9ebed;"></div>
<svg class="r" style="left:217.0px;top:1394.3px;" width="28.0" height="28.0" viewBox="0 0 28.0 28.0"><rect x="1.5" y="1.5" width="24.5" height="24.5" rx="3" fill="#fff" stroke="#7d8998" stroke-width="3"/></svg>
<div class="t" style="left:365.3px;top:1394.9px;font-size:24.5px;line-height:24.5px;font-weight:400;color:#000716;letter-spacing:0px;font-style:normal;transform:scaleX(1.0143);transform-origin:0 0;">Lorem Ipsum</div>
<div class="t" style="left:770.9px;top:1394.9px;font-size:24.5px;line-height:24.5px;font-weight:400;color:#000716;letter-spacing:0px;font-style:normal;transform:scaleX(1.0274);transform-origin:0 0;">Name</div>
<div class="t" style="left:1179.0px;top:1394.9px;font-size:24.5px;line-height:24.5px;font-weight:400;color:#000716;letter-spacing:0px;font-style:normal;transform:scaleX(0.9269);transform-origin:0 0;">VALUE</div>
<div class="t" style="left:1583.6px;top:1394.9px;font-size:24.5px;line-height:24.5px;font-weight:400;color:#000716;letter-spacing:0px;font-style:normal;transform:scaleX(0.9946);transform-origin:0 0;">Purpose (1-6)</div>
<div class="t" style="left:1988.8px;top:1394.9px;font-size:24.5px;line-height:24.5px;font-weight:400;color:#0972d3;letter-spacing:0px;font-style:normal;transform:scaleX(1.0465);transform-origin:0 0;">Link</div>
<div class="r" style="left:143.0px;top:1437.7px;width:2218.0px;height:1.5px;background:#e9ebed;"></div>
<svg class="r" style="left:217.0px;top:1460.1px;" width="28.0" height="28.0" viewBox="0 0 28.0 28.0"><rect x="1.5" y="1.5" width="24.5" height="24.5" rx="3" fill="#fff" stroke="#7d8998" stroke-width="3"/></svg>
<div class="t" style="left:365.3px;top:1460.7px;font-size:24.5px;line-height:24.5px;font-weight:400;color:#000716;letter-spacing:0px;font-style:normal;transform:scaleX(1.0143);transform-origin:0 0;">Lorem Ipsum</div>
<div class="t" style="left:770.9px;top:1460.7px;font-size:24.5px;line-height:24.5px;font-weight:400;color:#000716;letter-spacing:0px;font-style:normal;transform:scaleX(1.0274);transform-origin:0 0;">Name</div>
<div class="t" style="left:1179.0px;top:1460.7px;font-size:24.5px;line-height:24.5px;font-weight:400;color:#000716;letter-spacing:0px;font-style:normal;transform:scaleX(0.9269);transform-origin:0 0;">VALUE</div>
<div class="t" style="left:1583.6px;top:1460.7px;font-size:24.5px;line-height:24.5px;font-weight:400;color:#000716;letter-spacing:0px;font-style:normal;transform:scaleX(0.9946);transform-origin:0 0;">Purpose (1-6)</div>
<div class="t" style="left:1988.8px;top:1460.7px;font-size:24.5px;line-height:24.5px;font-weight:400;color:#0972d3;letter-spacing:0px;font-style:normal;transform:scaleX(1.0465);transform-origin:0 0;">Link</div>
<div class="r" style="left:143.0px;top:1503.8px;width:2218.0px;height:1.5px;background:#e9ebed;"></div>
<svg class="r" style="left:217.0px;top:1528.0px;" width="28.0" height="28.0" viewBox="0 0 28.0 28.0"><rect x="1.5" y="1.5" width="24.5" height="24.5" rx="3" fill="#fff" stroke="#7d8998" stroke-width="3"/></svg>
<div class="t" style="left:365.3px;top:1528.6px;font-size:24.5px;line-height:24.5px;font-weight:400;color:#000716;letter-spacing:0px;font-style:normal;transform:scaleX(1.0143);transform-origin:0 0;">Lorem Ipsum</div>
<div class="t" style="left:770.9px;top:1528.6px;font-size:24.5px;line-height:24.5px;font-weight:400;color:#000716;letter-spacing:0px;font-style:normal;transform:scaleX(1.0274);transform-origin:0 0;">Name</div>
<div class="t" style="left:1179.0px;top:1528.6px;font-size:24.5px;line-height:24.5px;font-weight:400;color:#000716;letter-spacing:0px;font-style:normal;transform:scaleX(0.9269);transform-origin:0 0;">VALUE</div>
<div class="t" style="left:1583.6px;top:1528.6px;font-size:24.5px;line-height:24.5px;font-weight:400;color:#000716;letter-spacing:0px;font-style:normal;transform:scaleX(0.9946);transform-origin:0 0;">Purpose (1-6)</div>
<div class="t" style="left:1988.8px;top:1528.6px;font-size:24.5px;line-height:24.5px;font-weight:400;color:#0972d3;letter-spacing:0px;font-style:normal;transform:scaleX(1.0465);transform-origin:0 0;">Link</div>
<div class="r" style="left:143.0px;top:1571.5px;width:2218.0px;height:1.5px;background:#e9ebed;"></div>
<svg class="r" style="left:217.0px;top:1592.8px;" width="28.0" height="28.0" viewBox="0 0 28.0 28.0"><rect x="1.5" y="1.5" width="24.5" height="24.5" rx="3" fill="#fff" stroke="#7d8998" stroke-width="3"/></svg>
<div class="t" style="left:365.3px;top:1593.4px;font-size:24.5px;line-height:24.5px;font-weight:400;color:#000716;letter-spacing:0px;font-style:normal;transform:scaleX(1.0143);transform-origin:0 0;">Lorem Ipsum</div>
<div class="t" style="left:770.9px;top:1593.4px;font-size:24.5px;line-height:24.5px;font-weight:400;color:#000716;letter-spacing:0px;font-style:normal;transform:scaleX(1.0274);transform-origin:0 0;">Name</div>
<div class="t" style="left:1179.0px;top:1593.4px;font-size:24.5px;line-height:24.5px;font-weight:400;color:#000716;letter-spacing:0px;font-style:normal;transform:scaleX(0.9269);transform-origin:0 0;">VALUE</div>
<div class="t" style="left:1583.6px;top:1593.4px;font-size:24.5px;line-height:24.5px;font-weight:400;color:#000716;letter-spacing:0px;font-style:normal;transform:scaleX(0.9946);transform-origin:0 0;">Purpose (1-6)</div>
<div class="t" style="left:1988.8px;top:1593.4px;font-size:24.5px;line-height:24.5px;font-weight:400;color:#0972d3;letter-spacing:0px;font-style:normal;transform:scaleX(1.0465);transform-origin:0 0;">Link</div>
<div class="r" style="left:143.0px;top:1635.5px;width:2218.0px;height:1.5px;background:#e9ebed;"></div>
<svg class="r" style="left:217.0px;top:1658.8px;" width="28.0" height="28.0" viewBox="0 0 28.0 28.0"><rect x="1.5" y="1.5" width="24.5" height="24.5" rx="3" fill="#fff" stroke="#7d8998" stroke-width="3"/></svg>
<div class="t" style="left:365.3px;top:1659.4px;font-size:24.5px;line-height:24.5px;font-weight:400;color:#000716;letter-spacing:0px;font-style:normal;transform:scaleX(1.0143);transform-origin:0 0;">Lorem Ipsum</div>
<div class="t" style="left:770.9px;top:1659.4px;font-size:24.5px;line-height:24.5px;font-weight:400;color:#000716;letter-spacing:0px;font-style:normal;transform:scaleX(1.0274);transform-origin:0 0;">Name</div>
<div class="t" style="left:1179.0px;top:1659.4px;font-size:24.5px;line-height:24.5px;font-weight:400;color:#000716;letter-spacing:0px;font-style:normal;transform:scaleX(0.9269);transform-origin:0 0;">VALUE</div>
<div class="t" style="left:1583.6px;top:1659.4px;font-size:24.5px;line-height:24.5px;font-weight:400;color:#000716;letter-spacing:0px;font-style:normal;transform:scaleX(0.9946);transform-origin:0 0;">Purpose (1-6)</div>
<div class="t" style="left:1988.8px;top:1659.4px;font-size:24.5px;line-height:24.5px;font-weight:400;color:#0972d3;letter-spacing:0px;font-style:normal;transform:scaleX(1.0465);transform-origin:0 0;">Link</div>
<div class="r" style="left:143.0px;top:1700.8px;width:2218.0px;height:1.5px;background:#e9ebed;"></div>
<div class="r" style="left:0.0px;top:0.0px;width:2500.0px;height:2.0px;background:#000;"></div>
<div class="r" style="left:0.0px;top:1702.0px;width:2500.0px;height:3.0px;background:#000;"></div>
<div class="r" style="left:0.0px;top:0.0px;width:2.0px;height:1705.0px;background:#000;"></div>
<div class="r" style="left:2497.0px;top:0.0px;width:3.0px;height:1705.0px;background:#000;"></div>
</body></html>
